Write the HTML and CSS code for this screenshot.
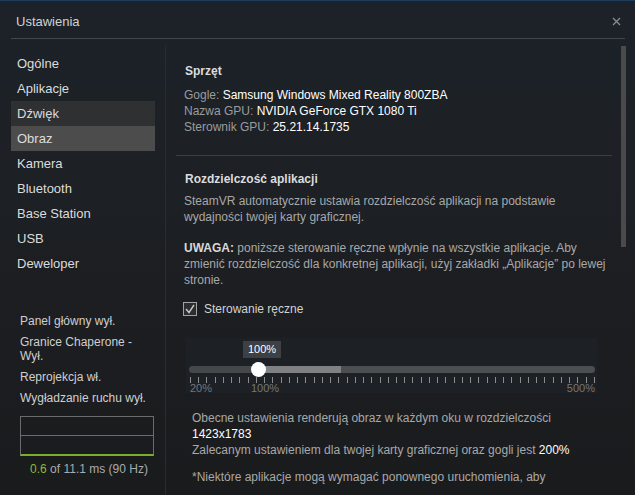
FILE: index.html
```html
<!DOCTYPE html>
<html>
<head>
    <meta charset="utf-8">
    <link rel="stylesheet" href="styles.css">
</head>
<body>
    <div class="window">
        <!-- Nagłówek okna -->
        <div class="header">
            <span class="title">Ustawienia</span>
            <svg class="close" width="9" height="9" viewBox="0 0 9 9">
                <path d="M1 1 L8 8 M8 1 L1 8" stroke="#8a8d90" stroke-width="1.3"/>
            </svg>
        </div>

        <div class="columns">
            <div class="sidebar">
                <ul class="nav">
                    <li>Ogólne</li>
                    <li>Aplikacje</li>
                    <li class="hover">Dźwięk</li>
                    <li class="active">Obraz</li>
                    <li>Kamera</li>
                    <li>Bluetooth</li>
                    <li>Base Station</li>
                    <li>USB</li>
                    <li>Deweloper</li>
                </ul>

                <div class="status">
                    <p>Panel główny wył.</p>
                    <p>Granice Chaperone - Wył.</p>
                    <p>Reprojekcja wł.</p>
                    <p>Wygładzanie ruchu wył.</p>

                    <div class="graph">
                        <div class="graph-half"></div>
                        <div class="graph-half last"></div>
                    </div>
                    <div class="timing"><span class="green">0.6</span> of 11.1 ms (90 Hz)</div>
                </div>
            </div>

            <div class="content">
                <div class="section first">
                    <h3>Sprzęt</h3>
                    <div class="line"><span class="label">Gogle:</span> Samsung Windows Mixed Reality 800ZBA</div>
                    <div class="line"><span class="label">Nazwa GPU:</span> NVIDIA GeForce GTX 1080 Ti</div>
                    <div class="line"><span class="label">Sterownik GPU:</span> 25.21.14.1735</div>
                </div>

                <div class="section">
                    <h3>Rozdzielczość aplikacji</h3>
                    <p class="text">SteamVR automatycznie ustawia rozdzielczość aplikacji na podstawie wydajności twojej karty graficznej.</p>
                    <p class="text warn"><b>UWAGA:</b> poniższe sterowanie ręczne wpłynie na wszystkie aplikacje. Aby zmienić rozdzielczość dla konkretnej aplikacji, użyj zakładki „Aplikacje” po lewej stronie.</p>

                    <div class="checkbox-row">
                        <svg class="checkbox" width="14" height="14" viewBox="0 0 14 14">
                            <rect x="0.5" y="0.5" width="13" height="13" fill="#2b2d2f" stroke="#a0a2a4"/>
                            <path d="M3 7 L6 10.5 L11 3" fill="none" stroke="#c8c8c8" stroke-width="1.4"/>
                        </svg>
                        <span>Sterowanie ręczne</span>
                    </div>

                    <div class="slider">
                        <div class="slider-top">
                            <span class="tip">100%</span>
                        </div>
                        <div class="track">
                            <div class="track-left"></div>
                            <div class="thumb"></div>
                            <div class="track-rec"></div>
                            <div class="track-rest"></div>
                        </div>
                        <div class="ticks"></div>
                        <div class="scale">
                            <span class="s20">20%</span>
                            <span class="s100">100%</span>
                            <span class="s500">500%</span>
                        </div>
                    </div>

                    <div class="result">
                        <p>Obecne ustawienia renderują obraz w każdym oku w rozdzielczości <span class="white">1423x1783</span><br>
                        Zalecanym ustawieniem dla twojej karty graficznej oraz gogli jest <span class="white">200%</span></p>
                        <p>*Niektóre aplikacje mogą wymagać ponownego uruchomienia, aby</p>
                    </div>
                </div>

                <div class="scrollbar"></div>
            </div>
        </div>
    </div>
</body>
</html>
```

FILE: styles.css
```css
* {
  box-sizing: border-box;
}

body {
  margin: 0;
  font-family: "Liberation Sans", Arial, sans-serif;
  background: #1a1b1d;
  overflow: hidden;
}

.window {
  width: 635px;
  height: 495px;
  border-top: 1px solid #1d3d5d;
  background: linear-gradient(#1c2229 0, #1d2126 120px, #1c1e21 300px, #1a1b1d 495px);
  overflow: hidden;
}

.header {
  height: 38px;
  margin: 0 10px 0 11px;
  border-bottom: 1px solid #43464a;
  display: flex;
  align-items: center;
  justify-content: space-between;
  padding: 3px 4px 0 5px;
}

.title {
  color: #d0d2d4;
  font-size: 13px;
}

/* Lewa i prawa kolumna */
.columns {
  display: flex;
  padding-top: 7px;
  height: 456px;
}

.sidebar {
  width: 166px;
  border-right: 1px solid #2a2c2f;
  padding: 5px 10px 0 11px;
}

.nav {
  list-style: none;
  margin: 0;
  padding: 0;
}

.nav li {
  height: 25px;
  line-height: 25px;
  padding-left: 6px;
  font-size: 13px;
  color: #dcdcdc;
}

.nav li.hover {
  background-color: #2f3032;
}

.nav li.active {
  background-color: #4c4c4c;
}

.status {
  margin-top: 38px;
  padding-left: 9px;
}

.status p {
  margin: 0 0 7px 0;
  font-size: 12px;
  line-height: 14px;
  color: #cfcfcf;
}

.graph {
  margin-top: 11px;
  width: 134px;
  height: 40px;
  border: 1px solid #6b6b6b;
  border-bottom: 2px solid #79ad2c;
}

.graph-half {
  height: 19px;
  border-bottom: 1px solid #6b6b6b;
}

.graph-half.last {
  border-bottom: none;
}

.timing {
  width: 134px;
  text-align: center;
  padding-left: 4px;
  margin-top: 6px;
  font-size: 12px;
  color: #a9abad;
}

.green {
  color: #8cba3c;
}

.content {
  position: relative;
  flex: 1;
  padding: 0 23px 0 10px;
}

.scrollbar {
  position: absolute;
  left: 455px;
  top: 0;
  width: 5px;
  height: 201px;
  background-color: #4a4a4a;
}

.section {
  padding: 16px 0 0 8px;
  color: #a8a8a8;
  font-size: 12px;
}

.section.first {
  padding-top: 18px;
  padding-bottom: 20px;
  border-bottom: 1px solid #3c3e41;
}

h3 {
  margin: 0 0 9px 1px;
  font-size: 12px;
  line-height: 14px;
  color: #dcdcdc;
}

.section h3 + .text {
  margin-top: -2px;
}

.line {
  line-height: 16px;
  color: #ffffff;
}

.label {
  color: #9a9c9e;
}

.text {
  margin: 0 0 15px 0;
  line-height: 16px;
}

.text.warn {
  margin-bottom: 13px;
}

.text b {
  color: #d8d8d8;
}

.checkbox-row {
  display: flex;
  align-items: center;
  height: 16px;
  color: #d2d2d2;
}

.checkbox {
  margin: 0 7px 0 -1px;
}

/* Suwak */
.slider {
  margin: 21px 15px 0 2px;
  height: 55px;
  padding: 3px 2px 0 3px;
  background-color: #1d2024;
}

.slider-top {
  height: 17px;
  position: relative;
}

.tip {
  position: absolute;
  left: 54px;
  top: 0;
  width: 38px;
  height: 17px;
  line-height: 17px;
  text-align: center;
  background-color: #3d4044;
  color: #ffffff;
  font-size: 11px;
}

.track {
  position: relative;
  display: flex;
  margin-top: 8px;
  height: 7px;
  border-radius: 4px;
}

.track-left {
  width: 69px;
  background-color: #45484b;
  border-radius: 4px 0 0 4px;
}

.track-rec {
  width: 83px;
  background-color: #7f8183;
}

.track-rest {
  flex: 1;
  background-color: #4c4f52;
  border-radius: 0 4px 4px 0;
}

.thumb {
  position: absolute;
  left: 62px;
  top: -4px;
  width: 15px;
  height: 15px;
  border-radius: 50%;
  background-color: #ffffff;
}

.ticks {
  margin-top: 4px;
  margin-left: 1px;
  height: 6px;
  width: 405px;
  background: repeating-linear-gradient(to right, #8a8c8e 0 1px, transparent 1px 8.24px);
}

.scale {
  position: relative;
  height: 12px;
  font-size: 11px;
  color: #74777a;
}

.scale span {
  position: absolute;
  top: -1px;
  line-height: 13px;
}

.s20 {
  left: 1px;
}

.s100 {
  left: 62px;
}

.s500 {
  right: 0;
}

.result {
  margin: 17px 0 0 8px;
}

.result p {
  margin: 0 0 11px 0;
  line-height: 16px;
}

.white {
  color: #ffffff;
}
```
